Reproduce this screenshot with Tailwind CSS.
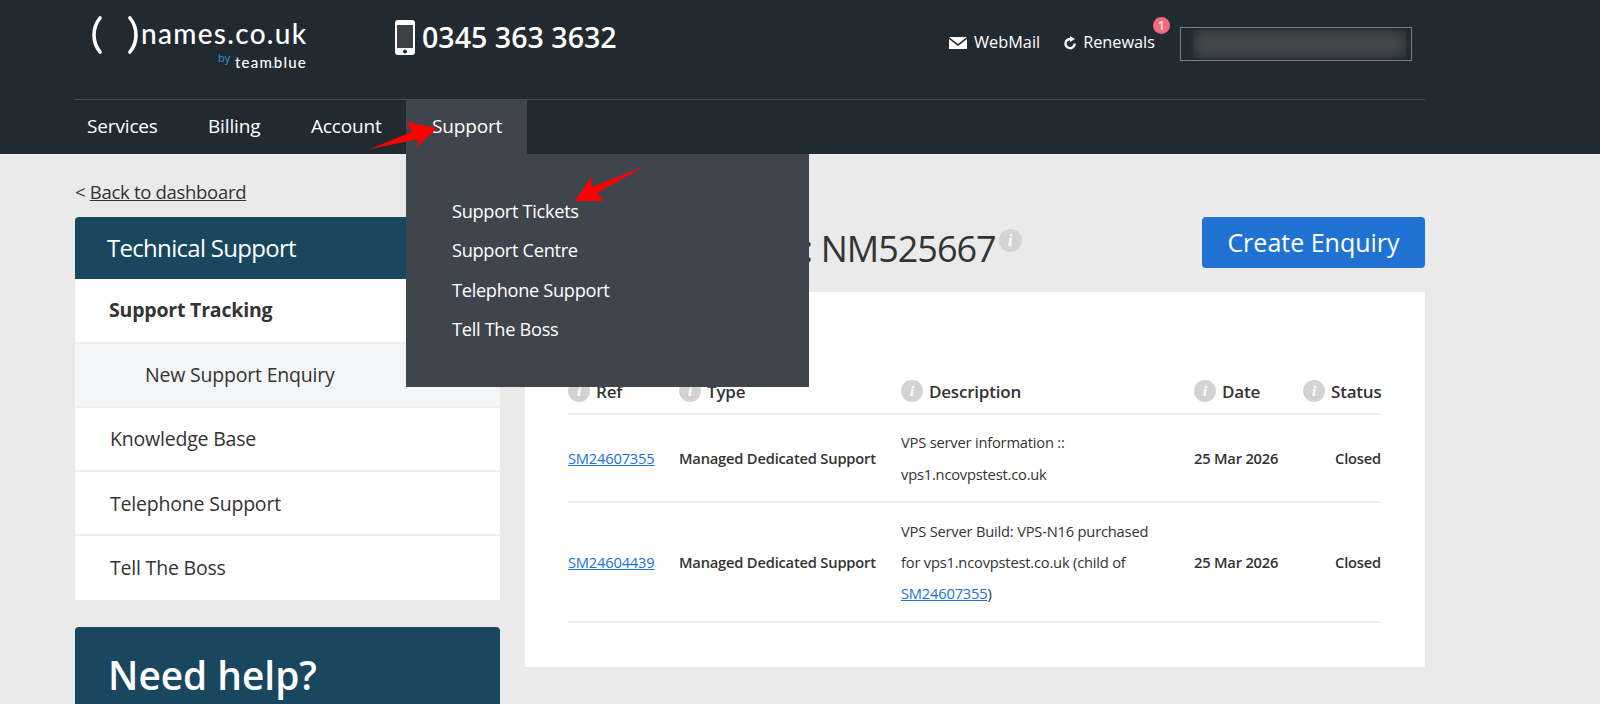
<!DOCTYPE html>
<html lang="en">
<head>
  <meta charset="UTF-8" />
  <title>names.co.uk - Support</title>
  <script src="https://cdn.jsdelivr.net/npm/@tailwindcss/browser@4"></script>
</head>
<body class="relative h-[704px] overflow-hidden bg-[#eaeaea] font-['Open_Sans',sans-serif] text-[#333]">

  <!-- Header -->
  <header class="h-[154px] bg-[#222a31] text-white">
    <div class="ml-[75px] w-[1350px]">
      <div class="flex h-[100px] border-b border-[#464c51]">
        <!-- logo -->
        <div class="relative ml-[15px] h-[80px] w-[222px]">
          <svg class="absolute left-0 top-[16px]" width="50" height="40" viewBox="0 0 50 40" fill="none" stroke="#fff" stroke-width="3.6" stroke-linecap="round"><path d="M10 2 C2 12 2 26 10 36" /><path d="M40 2 C48 12 48 26 40 36" /></svg>
          <span class="absolute left-[51px] top-[15px] font-['Lato',sans-serif] text-[28px] font-medium leading-[36px] tracking-[1.3px]">names.co.uk</span>
          <span class="absolute left-[128px] top-[50px] text-[11px] leading-[16px] text-[#2a9ad6]">by</span>
          <span class="absolute left-[145px] top-[53px] font-['Lato',sans-serif] text-[15px] font-medium leading-[18px] tracking-[1.200px]">team<span class="mx-[-2px] text-[#2a9ad6]">.</span>blue</span>
        </div>
        <!-- phone -->
        <div class="ml-[83px] flex h-[75px] items-center gap-[7px]">
          <svg width="20" height="35" viewBox="0 0 20 35"><rect x="1" y="4" width="18" height="25" fill="#3c4147" /><path fill="#fff" fill-rule="evenodd" d="M3 0h14a3 3 0 0 1 3 3v29a3 3 0 0 1-3 3H3a3 3 0 0 1-3-3V3a3 3 0 0 1 3-3zM2 5v23h16V5zm8 24.500a2 2 0 1 0 0 4 2 2 0 0 0 0-4z" /></svg>
          <span class="text-[28.600px] font-semibold leading-none">0345 363 3632</span>
        </div>
        <!-- top right links -->
        <div class="ml-auto flex h-[85px] items-center pr-[13px]">
          <svg class="mr-[7px]" width="18" height="12" viewBox="0 0 18 12"><path fill="#fff" d="M0 0h18L9 7zM0 2l9 7 9-7v10H0z" /></svg>
          <span class="text-[16.300px]">WebMail</span>
          <svg class="ml-[24px] mr-[7px]" width="12" height="14" viewBox="0 0 12 14" fill="none"><path stroke="#fff" stroke-width="2.400" d="M7.500 3.200A4.600 4.600 0 1 0 10.700 7.500" /><path fill="#fff" d="M6 0l5 3-5 3z" /></svg>
          <span class="relative text-[16.300px]">Renewals
            <span class="absolute right-[-15px] top-[-13px] flex h-[17px] w-[17px] items-center justify-center rounded-full bg-[#f4687c] text-[12px] font-semibold text-[#ffe9e0]">1</span>
          </span>
          <div class="ml-[25px] mt-[3px] flex h-[34px] w-[232px] items-center border border-[#7b7f82] pl-[12px] pr-[5px]">
            <div class="h-[28px] w-full bg-[#2b3238] p-[3px]"><div class="h-full w-full rounded-sm bg-[#41474c] blur-[4px]"></div></div>
          </div>
        </div>
      </div>
      <!-- nav -->
      <nav class="flex h-[54px] items-center text-[19px] tracking-[-0.150px]">
        <a class="flex h-full w-[122px] items-center pb-[2px] pl-[12px]">Services</a>
        <a class="flex h-full w-[103px] items-center pb-[2px] pl-[11px]">Billing</a>
        <a class="flex h-full w-[106px] items-center pb-[2px] pl-[11px]">Account</a>
        <a class="flex h-full w-[121px] items-center bg-[#3f454d] pb-[2px] pl-[26px]">Support</a>
      </nav>
    </div>
  </header>

  <!-- Body columns -->
  <div class="ml-[75px] flex w-[1350px] items-start gap-[25px]">
    <aside class="w-[425px] shrink-0">
      <p class="flex h-[63px] items-start pt-[26px] text-[18.500px] leading-[24px] tracking-[-0.3px]">&lt;&nbsp;<a class="underline">Back to dashboard</a></p>
      <h2 class="flex h-[62px] items-center rounded-t-[4px] bg-[#19475f] pl-[32px] text-[24px] tracking-[-0.7px] text-white">Technical Support</h2>
      <ul class="bg-white text-[19.500px] tracking-[-0.2px]">
        <li class="flex h-[65px] items-center border-b-2 border-[#eeeeee] pb-[2px] pl-[34px] font-bold">Support Tracking</li>
        <li class="flex h-[64px] items-center border-b-2 border-[#eeeeee] bg-[#f4f5f7] pl-[70px]">New Support Enquiry</li>
        <li class="flex h-[64px] items-center border-b-2 border-[#eeeeee] pl-[35px]">Knowledge Base</li>
        <li class="flex h-[64px] items-center border-b-2 border-[#eeeeee] pt-[2px] pl-[35px]">Telephone Support</li>
        <li class="flex h-[64px] items-center pl-[35px]">Tell The Boss</li>
      </ul>
      <div class="mt-[27px] h-[100px] rounded-t-[4px] bg-[#19475f] pl-[33px] pt-[22px] text-[38.800px] font-semibold leading-[52px] text-white">Need help?</div>
    </aside>

    <main class="min-w-0 flex-1">
      <div class="flex h-[138px] items-start pt-[63px]">
        <h1 class="ml-[9px] mt-[7px] whitespace-nowrap text-[36px] leading-[50px] tracking-[-1px]">Support Tracking: NM525667</h1>
        <span class="ml-[3px] mt-[12px] flex h-[23px] w-[23px] items-center justify-center rounded-full bg-[#d3d3d3] font-['Liberation_Serif',serif] text-[16px] font-bold italic text-white">i</span>
        <button class="ml-auto h-[51px] w-[223px] rounded-[4px] bg-[#2173d3] text-[25px] text-white">Create Enquiry</button>
      </div>
      <section class="h-[375px] bg-white pl-[43px] pr-[44px] pt-[80px]">
        <table class="w-full table-fixed border-collapse text-[14.700px] tracking-[-0.2px]">
          <thead class="text-[17px]">
            <tr class="h-[42px] border-b-2 border-[#eeeeee]">
              <th class="w-[111px] pb-[4px] text-left font-semibold"><span class="inline-flex items-center gap-[6px]"><i class="flex h-[22px] w-[22px] items-center justify-center rounded-full bg-[#d3d3d3] font-['Liberation_Serif',serif] text-[15px] font-bold text-white">i</i>Ref</span></th>
              <th class="w-[222px] pb-[4px] text-left font-semibold"><span class="inline-flex items-center gap-[6px]"><i class="flex h-[22px] w-[22px] items-center justify-center rounded-full bg-[#d3d3d3] font-['Liberation_Serif',serif] text-[15px] font-bold text-white">i</i>Type</span></th>
              <th class="w-[293px] pb-[4px] text-left font-semibold"><span class="inline-flex items-center gap-[6px]"><i class="flex h-[22px] w-[22px] items-center justify-center rounded-full bg-[#d3d3d3] font-['Liberation_Serif',serif] text-[15px] font-bold text-white">i</i>Description</span></th>
              <th class="w-[109px] pb-[4px] text-left font-semibold"><span class="inline-flex items-center gap-[6px]"><i class="flex h-[22px] w-[22px] items-center justify-center rounded-full bg-[#d3d3d3] font-['Liberation_Serif',serif] text-[15px] font-bold text-white">i</i>Date</span></th>
              <th class="pb-[4px] text-right font-semibold"><span class="inline-flex items-center gap-[6px]"><i class="flex h-[22px] w-[22px] items-center justify-center rounded-full bg-[#d3d3d3] font-['Liberation_Serif',serif] text-[15px] font-bold text-white">i</i>Status</span></th>
            </tr>
          </thead>
          <tbody>
            <tr class="h-[88px] border-b-2 border-[#eeeeee]">
              <td><a class="text-[#2173d3] underline">SM24607355</a></td>
              <td class="font-semibold">Managed Dedicated Support</td>
              <td class="leading-[32px]">VPS server information ::<br />vps1.ncovpstest.co.uk</td>
              <td class="font-semibold">25 Mar 2026</td>
              <td class="text-right font-semibold">Closed</td>
            </tr>
            <tr class="h-[120px] border-b-2 border-[#eeeeee]">
              <td><a class="text-[#2173d3] underline">SM24604439</a></td>
              <td class="font-semibold">Managed Dedicated Support</td>
              <td class="leading-[31px]">VPS Server Build: VPS-N16 purchased<br />for vps1.ncovpstest.co.uk (child of<br /><a class="text-[#2173d3] underline">SM24607355</a>)</td>
              <td class="font-semibold">25 Mar 2026</td>
              <td class="text-right font-semibold">Closed</td>
            </tr>
          </tbody>
        </table>
      </section>
    </main>
  </div>

  <!-- Support dropdown -->
  <div class="absolute left-[406px] top-[154px] h-[233px] w-[403px] bg-[#3f454d] pl-[46px] pt-[38px] text-[18.200px] tracking-[-0.3px] text-white">
    <a class="block h-[39.300px] leading-[39px]">Support Tickets</a>
    <a class="block h-[39.300px] leading-[39px]">Support Centre</a>
    <a class="block h-[39.300px] leading-[39px]">Telephone Support</a>
    <a class="block h-[39.300px] leading-[39px]">Tell The Boss</a>
  </div>

  <!-- Red annotation arrows -->
  <svg class="absolute left-0 top-0" width="1600" height="704" fill="#ff0000">
    <polygon points="370,149 412,132 407,122 437,128 416,148 419,139" />
    <polygon points="645,166 597,193 604,201 575,201 591,177 592,187" />
  </svg>
</body>
</html>
